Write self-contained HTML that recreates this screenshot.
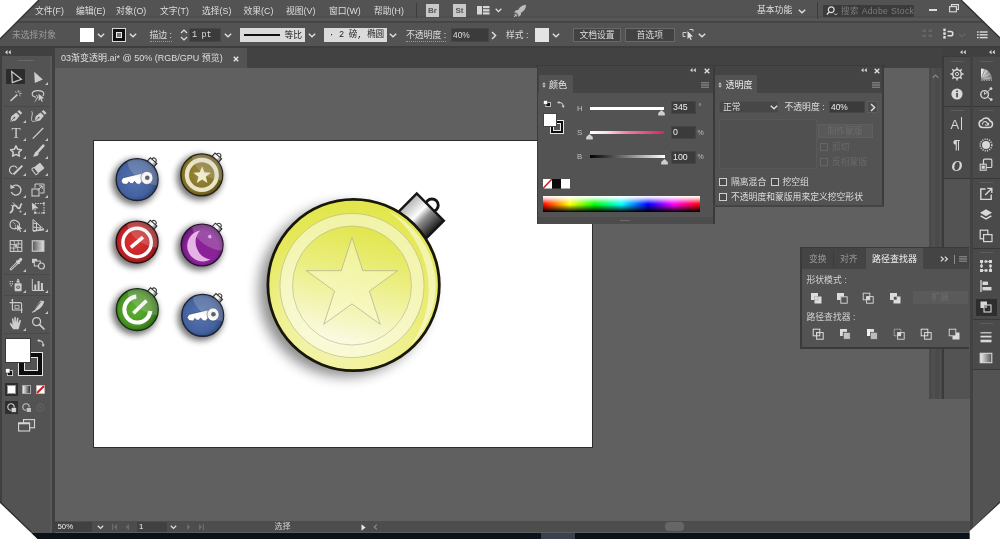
<!DOCTYPE html>
<html lang="zh-CN">
<head>
<meta charset="utf-8">
<title>03渐变透明.ai* @ 50% (RGB/GPU 预览)</title>
<style>
html,body{margin:0;padding:0}
body{width:1000px;height:539px;overflow:hidden;position:relative;background:#606060;
 font-family:"Liberation Sans","Noto Sans CJK SC",sans-serif;font-size:8.8px;color:#dedede;line-height:12px}
#app{position:absolute;left:0;top:0;width:1000px;height:539px;overflow:hidden;background:#606060;will-change:transform}
.a{position:absolute}
.t{position:absolute;white-space:nowrap;line-height:12px;height:12px}
svg{position:absolute;overflow:visible}
.dim{color:#777}
.dk{color:#222}
.inp{position:absolute;background:#3b3b3b;border:1px solid #464646;box-sizing:border-box}
.btn{position:absolute;background:#424242;border:1px solid #686868;box-sizing:border-box;text-align:center;line-height:12px}
.cb{position:absolute;width:7px;height:7px;border:1px solid #cfcfcf;box-sizing:border-box;background:#4a4a4a}
.sep{position:absolute;background:#3a3a3a;height:1px}
.grip{position:absolute;height:1px;background:#666}
</style>
</head>
<body>
<div id="app">

<!-- ================= MENU BAR ================= -->
<div class="a" id="menubar" style="left:0;top:0;width:1000px;height:22px;background:linear-gradient(180deg,#535353 0,#535353 16px,#4e4e4e 16.5px,#4e4e4e 18px,#575757 18.500px,#575757 20.500px,#444 21px,#444 22px)"></div>
<span class="t" style="left:35px;top:5px">文件(F)</span>
<span class="t" style="left:76px;top:5px">编辑(E)</span>
<span class="t" style="left:116px;top:5px">对象(O)</span>
<span class="t" style="left:160px;top:5px">文字(T)</span>
<span class="t" style="left:202px;top:5px">选择(S)</span>
<span class="t" style="left:243.5px;top:5px">效果(C)</span>
<span class="t" style="left:286px;top:5px">视图(V)</span>
<span class="t" style="left:329px;top:5px">窗口(W)</span>
<span class="t" style="left:374px;top:5px">帮助(H)</span>
<div class="a" style="left:416px;top:3px;width:1px;height:15px;background:#3c3c3c"></div>
<div class="a" style="left:426px;top:4px;width:13px;height:13px;background:#c9c9c9;color:#555;font-size:8px;font-weight:bold;text-align:center;line-height:13px">Br</div>
<div class="a" style="left:453px;top:4px;width:13px;height:13px;background:#c9c9c9;color:#555;font-size:8px;font-weight:bold;text-align:center;line-height:13px">St</div>
<svg style="left:477px;top:6px" width="13" height="9" viewBox="0 0 13 9"><rect x="0" y="0" width="5" height="8.5" fill="#d6d6d6"/><rect x="6" y="0" width="6.5" height="2.2" fill="#d6d6d6"/><rect x="6" y="3.2" width="6.5" height="2.2" fill="#d6d6d6"/><rect x="6" y="6.3" width="6.5" height="2.2" fill="#d6d6d6"/></svg>
<svg style="left:495px;top:8px" width="7" height="5" viewBox="0 0 7 5"><path d="M.7.8L3.5 3.6 6.3.8" fill="none" stroke="#e2e2e2" stroke-width="1.3"/></svg>
<svg style="left:513px;top:4px" width="14" height="14" viewBox="0 0 14 14"><path d="M13 .8C9.5.9 6.8 2.7 5.2 6L3 6.2 1 8.6l2.6.2 1.6 1.6.2 2.6L7.8 11 8 8.8C11.300 7.200 13.100 4.500 13 .8Z" fill="#bdbdbd"/><path d="M1.200 11.200l2.200-1.400M2.800 12.800l1.400-2.200M.8 13.200l2.600-2.600" stroke="#bdbdbd" stroke-width=".9"/></svg>
<span class="t" style="left:757px;top:4px">基本功能</span>
<svg style="left:798px;top:8.5px" width="8" height="5" viewBox="0 0 8 5"><path d="M.8.8L4 3.800 7.200.8" fill="none" stroke="#e2e2e2" stroke-width="1.3"/></svg>
<div class="a" style="left:817px;top:2px;width:1px;height:17px;background:#3c3c3c"></div>
<div class="a" style="left:823px;top:5px;width:91px;height:12px;background:#3b3b3b;border-radius:1px"></div>
<svg style="left:826px;top:6px" width="12" height="10" viewBox="0 0 12 10"><circle cx="5.200" cy="3.800" r="2.900" fill="none" stroke="#e0e0e0" stroke-width="1.200"/><path d="M3.200 6L.8 8.600" stroke="#e0e0e0" stroke-width="1.400"/><path d="M8.200 7.500l1.500 1.500 1.500-1.500" fill="none" stroke="#e0e0e0" stroke-width=".9"/></svg>
<span class="t" style="left:841px;top:5px;color:#7c7c7c;font-size:8.600px;letter-spacing:.35px">搜索 Adobe Stock</span>
<div class="a" style="left:929px;top:9px;width:8px;height:2px;background:#dcdcdc"></div>
<svg style="left:949px;top:4px" width="10" height="9" viewBox="0 0 10 9"><path d="M2.500 2.500V.6H9.400V5.500H7.500" fill="none" stroke="#dcdcdc" stroke-width="1.100"/><rect x=".6" y="2.600" width="6.800" height="5.200" fill="none" stroke="#dcdcdc" stroke-width="1.100"/></svg>


<!-- ================= CONTROL BAR ================= -->
<div class="a" id="ctrlbar" style="left:0;top:22px;width:1000px;height:24px;background:#535353;border-top:1px solid #474747;box-sizing:border-box"></div>
<div class="a" style="left:0;top:46px;width:1000px;height:2px;background:#3d3d3d"></div>
<span class="t" style="left:12px;top:28.5px;color:#9c9c9c">未选择对象</span>
<div class="a" style="left:80px;top:28px;width:14px;height:14px;background:#fff"></div>
<svg class="chev" style="left:97px;top:33px" width="8" height="5" viewBox="0 0 8 5"><path d="M.8.8L4 3.800 7.200.8" fill="none" stroke="#e2e2e2" stroke-width="1.300"/></svg>
<div class="a" style="left:112px;top:28px;width:14px;height:14px;background:#111;border:1px solid #d8d8d8;box-sizing:border-box"></div>
<div class="a" style="left:116px;top:32px;width:6px;height:6px;border:1px solid #e8e8e8;box-sizing:border-box;background:#777"></div>
<svg class="chev" style="left:129px;top:33px" width="8" height="5" viewBox="0 0 8 5"><path d="M.8.8L4 3.800 7.200.8" fill="none" stroke="#e2e2e2" stroke-width="1.300"/></svg>
<span class="t" style="left:149.500px;top:28.500px;border-bottom:1px dotted #9a9a9a;height:12.500px">描边 :</span>
<svg style="left:180px;top:28px" width="8" height="14" viewBox="0 0 8 14"><path d="M1 5L4 2 7 5M1 9L4 12 7 9" fill="none" stroke="#e2e2e2" stroke-width="1.200"/></svg>
<div class="inp" style="left:189px;top:28px;width:32px;height:14px"></div>
<span class="t" style="left:192px;top:28.500px;font-family:'Liberation Mono','Noto Sans CJK SC',monospace;font-size:8.500px;letter-spacing:-.3px">1 pt</span>
<svg class="chev" style="left:224px;top:33px" width="8" height="5" viewBox="0 0 8 5"><path d="M.8.8L4 3.800 7.200.8" fill="none" stroke="#e2e2e2" stroke-width="1.300"/></svg>
<div class="a" style="left:240px;top:28px;width:65px;height:14px;background:#dbdbdb"></div>
<div class="a" style="left:244px;top:34px;width:36px;height:2px;background:#111"></div>
<span class="t dk" style="left:284.500px;top:29px">等比</span>
<svg class="chev" style="left:308px;top:33px" width="8" height="5" viewBox="0 0 8 5"><path d="M.8.8L4 3.800 7.200.8" fill="none" stroke="#e2e2e2" stroke-width="1.300"/></svg>
<div class="a" style="left:323.500px;top:28px;width:63.500px;height:14px;background:#dbdbdb"></div>
<span class="t dk" style="left:329px;top:29px;font-family:'Liberation Mono','Noto Sans CJK SC',monospace;font-size:8.600px;letter-spacing:-.2px">· 2 磅, 椭圆</span>
<svg class="chev" style="left:389px;top:33px" width="8" height="5" viewBox="0 0 8 5"><path d="M.8.8L4 3.800 7.200.8" fill="none" stroke="#e2e2e2" stroke-width="1.300"/></svg>
<span class="t" style="left:406px;top:28.500px;border-bottom:1px dotted #9a9a9a;height:12.500px">不透明度 :</span>
<div class="inp" style="left:451px;top:28px;width:38px;height:14px"></div>
<span class="t" style="left:453px;top:28.500px;font-size:8.400px">40%</span>
<svg style="left:491px;top:30.500px" width="6" height="9" viewBox="0 0 6 9"><path d="M1 1L4.600 4.500 1 8" fill="none" stroke="#e2e2e2" stroke-width="1.400"/></svg>
<span class="t" style="left:506px;top:28.500px">样式 :</span>
<div class="a" style="left:535px;top:28px;width:14px;height:14px;background:#e4e4e4"></div>
<svg class="chev" style="left:552px;top:33px" width="8" height="5" viewBox="0 0 8 5"><path d="M.8.8L4 3.800 7.200.8" fill="none" stroke="#e2e2e2" stroke-width="1.300"/></svg>
<div class="btn" style="left:573px;top:27.500px;width:48px;height:14px;line-height:12px">文档设置</div>
<div class="btn" style="left:625px;top:27.500px;width:49.500px;height:14px;line-height:12px">首选项</div>
<svg style="left:682px;top:28px" width="13" height="13" viewBox="0 0 13 13"><path d="M1 4.500h3.500M1 4.500v4h2.500" fill="none" stroke="#cfcfcf" stroke-width="1"/><path d="M5.500 3l5.500 5.500-2.600.2 1.300 2.700-1.200.5-1.200-2.700-1.800 1.700z" fill="#e0e0e0"/><path d="M7.500 1.500h3.500v2" fill="none" stroke="#cfcfcf" stroke-width="1"/></svg>
<svg class="chev" style="left:698px;top:33px" width="8" height="5" viewBox="0 0 8 5"><path d="M.8.8L4 3.800 7.200.8" fill="none" stroke="#e2e2e2" stroke-width="1.300"/></svg>
<svg style="left:922px;top:29px" width="11" height="9" viewBox="0 0 11 9"><g fill="#656565"><rect x=".5" y=".5" width="3.500" height="2.500"/><rect x="6.500" y=".5" width="3.500" height="2.500"/><rect x=".5" y="5.500" width="3.500" height="2.500"/><rect x="6.500" y="5.500" width="3.500" height="2.500"/></g></svg>
<svg style="left:943px;top:28px" width="12" height="12" viewBox="0 0 12 12"><g fill="#e0e0e0"><rect x=".3" y=".6" width="2.400" height="2.600"/><rect x=".3" y="4.300" width="2.400" height="2.600"/><rect x=".3" y="8" width="2.400" height="2.600"/></g><path d="M4.500 3.600h3.200a2.100 2.100 0 0 1 0 4.200H4.500" fill="none" stroke="#e0e0e0" stroke-width="1.500"/></svg>
<svg class="chev" style="left:958px;top:33px" width="8" height="5" viewBox="0 0 8 5"><path d="M.8.8L4 3.800 7.200.8" fill="none" stroke="#666" stroke-width="1.200"/></svg>
<svg style="left:977px;top:31px" width="11" height="8" viewBox="0 0 11 8"><g fill="#dcdcdc"><rect x="0" y=".3" width="1.600" height="1.400"/><rect x="2.600" y=".3" width="8" height="1.400"/><rect x="0" y="3.100" width="1.600" height="1.400"/><rect x="2.600" y="3.100" width="8" height="1.400"/><rect x="0" y="5.900" width="1.600" height="1.400"/><rect x="2.600" y="5.900" width="8" height="1.400"/></g></svg>


<!-- ================= TAB BAR ================= -->
<div class="a" id="tabbar" style="left:0;top:48px;width:1000px;height:20px;background:#424242"></div>
<div class="a" id="doctab" style="left:54px;top:48px;width:193px;height:20px;background:#535353"></div>
<span class="t" style="left:61px;top:52px;font-size:9px">03渐变透明.ai* @ 50% (RGB/GPU 预览)</span>
<svg style="left:233px;top:55.500px" width="6" height="6" viewBox="0 0 6 6"><path d="M.8.8L5.200 5.200M5.200.8L.8 5.200" stroke="#e6e6e6" stroke-width="1.400"/></svg>


<!-- ================= CANVAS ================= -->
<div class="a" id="canvas" style="left:54px;top:68px;width:876px;height:454px;background:#606060"></div>
<div class="a" id="artboard" style="left:93px;top:140px;width:500px;height:308px;background:#fff;border:1px solid #2c2c2c;box-sizing:border-box"></div>
<svg id="art" style="left:0;top:0" width="1000" height="539" viewBox="0 0 1000 539">
<defs>
 <filter id="sh1" x="-50%" y="-50%" width="200%" height="200%"><feGaussianBlur stdDeviation="6.5"/></filter>
 <filter id="sh2" x="-50%" y="-50%" width="200%" height="200%"><feGaussianBlur stdDeviation="3"/></filter>
 <linearGradient id="gy" x1="0" y1="0" x2="0" y2="1"><stop offset="0" stop-color="#e2e64a"/><stop offset=".5" stop-color="#e8eb68"/><stop offset="1" stop-color="#f0f08e"/></linearGradient>
 <linearGradient id="gy2" x1=".6" y1="0" x2=".38" y2="1"><stop offset="0" stop-color="#e1e64c"/><stop offset=".4" stop-color="#ebee80"/><stop offset="1" stop-color="#fbfbe8"/></linearGradient>
 <radialGradient id="gyw" cx=".4" cy=".66" r=".5"><stop offset="0" stop-color="#fff" stop-opacity=".55"/><stop offset="1" stop-color="#fff" stop-opacity="0"/></radialGradient>
 <linearGradient id="gcap" x1="0" y1="0" x2="1" y2="0"><stop offset="0" stop-color="#b4b4b4"/><stop offset=".4" stop-color="#fdfdfd"/><stop offset=".6" stop-color="#8e8e8e"/><stop offset="1" stop-color="#1a1a1a"/></linearGradient>
 <radialGradient id="gblue" cx=".45" cy=".5" r=".58"><stop offset="0" stop-color="#5474b2"/><stop offset=".7" stop-color="#44629f"/><stop offset="1" stop-color="#2b406f"/></radialGradient>
 <radialGradient id="ggold" cx=".45" cy=".5" r=".58"><stop offset="0" stop-color="#9a8834"/><stop offset=".7" stop-color="#82722a"/><stop offset="1" stop-color="#4d4216"/></radialGradient>
 <radialGradient id="gred" cx=".45" cy=".5" r=".58"><stop offset="0" stop-color="#e2322f"/><stop offset=".65" stop-color="#c02226"/><stop offset="1" stop-color="#7a1216"/></radialGradient>
 <radialGradient id="gpur" cx=".5" cy=".55" r=".58"><stop offset="0" stop-color="#8a1f96"/><stop offset=".65" stop-color="#8a249a"/><stop offset="1" stop-color="#541260"/></radialGradient>
 <radialGradient id="ggrn" cx=".45" cy=".5" r=".58"><stop offset="0" stop-color="#5cb22e"/><stop offset=".65" stop-color="#4a9624"/><stop offset="1" stop-color="#275a14"/></radialGradient>
 <linearGradient id="gcaps" x1="0" y1="0" x2="1" y2="0"><stop offset="0" stop-color="#d8d8d8"/><stop offset=".5" stop-color="#fff"/><stop offset="1" stop-color="#6a6a6a"/></linearGradient>
 <clipPath id="abclip"><rect x="94" y="141" width="498" height="306"/></clipPath>
 <clipPath id="bclip"><circle r="20.6"/></clipPath>
 <g id="scap"><path d="M-2.400-25.200a2.400 2.700 0 0 1 4.800 0" fill="none" stroke="#3a3a3a" stroke-width="1"/><rect x="-4.400" y="-25.200" width="8.800" height="5.400" fill="url(#gcaps)" stroke="#2c2c2c" stroke-width="1"/></g>
 <g id="gloss" clip-path="url(#bclip)"><ellipse cx="6" cy="-17" rx="25" ry="15.500" transform="rotate(28)" fill="#d6d6d6" opacity=".24"/></g>
 <g id="key"><path d="M-16 1.300L-14.300-1.700 5-6.300 5 1.800 2.200 4.800-.4 4.300-2.500 1.700-4.600 4.100-7 3.700-8.200 2.100-10 4.700-14.200 4.300Z" fill="#fff" stroke="#2a3350" stroke-width=".5" stroke-linejoin="round"/><ellipse cx="9.800" cy="-1.700" rx="6" ry="6.500" fill="#fff" stroke="#2a3350" stroke-width=".5"/><circle cx="10.200" cy="-1.900" r="2.300" fill="#353c4c"/></g>
</defs>
<g clip-path="url(#abclip)">
 <circle cx="345" cy="290.500" r="86" fill="#000" opacity=".45" filter="url(#sh1)"/>
 <g transform="translate(353.600 285) rotate(45)">
  <circle cx="-1" cy="-111.800" r="6.300" fill="none" stroke="#161616" stroke-width="2.900"/>
  <rect x="-20" y="-109.300" width="38.300" height="27" fill="url(#gcap)" stroke="#161616" stroke-width="2.400" stroke-linejoin="miter"/>
 </g>
 <circle cx="353.600" cy="285" r="85.700" fill="url(#gy)"/>
 <circle cx="353.600" cy="285" r="85.700" fill="url(#gyw)"/>
 <circle cx="352" cy="285.500" r="72" fill="#fff" fill-opacity=".5" stroke="#b3b48a" stroke-width=".6"/>
 <circle cx="352" cy="285.500" r="59.500" fill="url(#gy2)" stroke="#b3b48a" stroke-width=".6"/>
 <path d="M352.00 237.50 L362.78 270.67 L397.65 270.67 L369.44 291.17 L380.21 324.33 L352.00 303.84 L323.79 324.33 L334.56 291.17 L306.35 270.67 L341.22 270.67Z" fill="#fbfbd2" fill-opacity=".5" stroke="#adad90" stroke-width=".7" stroke-linejoin="miter"/>
 <path d="M388 211 A83 83 0 0 1 411 345 A96 96 0 0 0 388 211Z" fill="#fff" opacity=".5"/>
 <circle cx="353.600" cy="285" r="85.700" fill="none" stroke="#17170a" stroke-width="2.800"/>
 <g transform="translate(137.1 179.6)">
  <circle cx="-2.200" cy="2.400" r="23" fill="#000" opacity="0.55" filter="url(#sh2)"/>
  <use href="#scap" transform="rotate(41)"/>
  <circle r="20.900" fill="url(#gblue)" stroke="#1b2233" stroke-width="1.400"/>
  <use href="#key"/>
  <use href="#gloss"/>
 </g>
<g transform="translate(201.8 174.9)">
  <circle cx="-2.200" cy="2.400" r="23" fill="#000" opacity="0.55" filter="url(#sh2)"/>
  <use href="#scap" transform="rotate(41)"/>
  <circle r="20.900" fill="url(#ggold)" stroke="#262210" stroke-width="1.400"/>
  <circle r="14.900" fill="none" stroke="#e9e5c6" stroke-width="4.300"/><path d="M0.30 -8.60 L2.59 -2.56 L9.05 -2.24 L4.01 1.81 L5.71 8.04 L0.30 4.50 L-5.11 8.04 L-3.41 1.81 L-8.45 -2.24 L-1.99 -2.56Z" fill="#f0ecd0"/>
  <use href="#gloss"/>
 </g>
<g transform="translate(137.1 242.1)">
  <circle cx="-2.200" cy="2.400" r="23" fill="#000" opacity="0.55" filter="url(#sh2)"/>
  <use href="#scap" transform="rotate(41)"/>
  <circle r="20.900" fill="url(#gred)" stroke="#2a0c0e" stroke-width="1.400"/>
  <circle cx="0" cy=".4" r="14.200" fill="none" stroke="#fff" stroke-width="3.400"/><path d="M-6.200 5.300L5.900-4.900" stroke="#fff" stroke-width="3.500"/>
  <use href="#gloss"/>
 </g>
<g transform="translate(202.1 245)">
  <circle cx="-2.200" cy="2.400" r="23" fill="#000" opacity="0.55" filter="url(#sh2)"/>
  <use href="#scap" transform="rotate(41)"/>
  <circle r="20.900" fill="url(#gpur)" stroke="#2a1030" stroke-width="1.400"/>
  <path d="M-2-14.500A15.600 15.600 0 1 0 8.300 14.500A17.600 17.600 0 0 1-2-14.500Z" fill="#e7b3e6"/><path d="M9.00 -10.65 L8.70 -8.85 L10.24 -7.86 L8.44 -7.58 L7.97 -5.81 L7.15 -7.45 L5.32 -7.34 L6.62 -8.63 L5.96 -10.33 L7.59 -9.49Z" fill="#edc6ee"/>
  <use href="#gloss"/>
 </g>
<g transform="translate(137.3 309.6)">
  <circle cx="-2.200" cy="2.400" r="23" fill="#000" opacity="0.55" filter="url(#sh2)"/>
  <use href="#scap" transform="rotate(41)"/>
  <circle r="20.900" fill="url(#ggrn)" stroke="#15300c" stroke-width="1.400"/>
  <path d="M-1-13A13 13 0 1 0 13 1.400" fill="none" stroke="#fff" stroke-width="4.100"/><path d="M-3.900 3.700L9.200-9" stroke="#fff" stroke-width="3.600"/>
  <use href="#gloss"/>
 </g>
<g transform="translate(202.7 315.4)">
  <circle cx="-2.200" cy="2.400" r="23" fill="#000" opacity="0.55" filter="url(#sh2)"/>
  <use href="#scap" transform="rotate(41)"/>
  <circle r="20.900" fill="url(#gblue)" stroke="#1b2233" stroke-width="1.400"/>
  <use href="#key" transform="translate(.5 .8)"/>
  <use href="#gloss"/>
 </g>
</g>
</svg>


<!-- ================= LEFT TOOLBAR ================= -->
<div class="a" id="toolbar" style="left:0;top:48px;width:54px;height:491px;background:#404040"></div>
<div class="a" style="left:2px;top:56px;width:50px;height:483px;background:#535353"></div>
<div class="a" style="left:49.500px;top:56px;width:2.500px;height:483px;background:#595959"></div>
<div class="a" style="left:0;top:48px;width:2px;height:491px;background:#404040"></div>
<svg style="left:4.500px;top:50px" width="6" height="4.500" viewBox="0 0 7 5"><path d="M3 0L0 2.500 3 5zM6.800 0L3.800 2.500 6.800 5z" fill="#d0d0d0"/></svg>
<div class="a" style="left:18px;top:60px;width:16px;height:1px;background:#686868"></div>
<div class="a" style="left:6px;top:69px;width:19px;height:15px;background:#2c2c2c;border-radius:1px"></div>
<div class="a" style="left:4px;top:105.5px;width:46px;height:1px;background:#494949"></div>
<div class="a" style="left:4px;top:178px;width:46px;height:1px;background:#494949"></div>
<div class="a" style="left:4px;top:273.8px;width:46px;height:1px;background:#494949"></div>
<div class="a" style="left:4px;top:295px;width:46px;height:1px;background:#494949"></div>
<div class="a" style="left:4px;top:333px;width:46px;height:1px;background:#494949"></div>
<svg style="left:8.5px;top:70.0px" width="14" height="14" viewBox="0 0 14 14"><path d="M2.700 1.500L3.300 12.700 12.400 9.300Z" fill="none" stroke="#cdcdcd" stroke-width="1.250" stroke-linejoin="miter"/></svg>
<svg style="left:30.7px;top:70.0px" width="14" height="14" viewBox="0 0 14 14"><path d="M3.200 1.800L3.800 13 11.800 9.600Z" fill="#cdcdcd"/></svg>
<svg style="left:44.7px;top:81.5px" width="3" height="3" viewBox="0 0 3 3"><path d="M3 0V3H0z" fill="#c4c4c4"/></svg>
<svg style="left:8.5px;top:88.5px" width="14" height="14" viewBox="0 0 14 14"><path d="M1.500 12L8.300 5.600" stroke="#cdcdcd" stroke-width="1.500"/><path d="M9.200 1.200v2.200M11.300 2.200l-1.200 1.300M12.600 4.600h-2.200M11.600 7l-1.400-1.100M6.200 2.600l1.400 1.200" stroke="#cdcdcd" stroke-width=".9"/></svg>
<svg style="left:30.7px;top:88.5px" width="14" height="14" viewBox="0 0 14 14"><path d="M5.200 8.200C2.800 7.900 1.200 6.600 1.200 5 1.200 3 3.800 1.600 7 1.600s5.800 1.400 5.800 3.400c0 .8-.4 1.500-1.100 2" fill="none" stroke="#cdcdcd" stroke-width="1.150"/><path d="M5.200 6.400a1.500 1.500 0 1 1 0 3.200c0 1.600-.6 2.600-1.600 3.200" fill="none" stroke="#cdcdcd" stroke-width=".9"/><path d="M7.600 4.800l5.600 4.400-2.600.3 1.300 2.700-1.200.6-1.300-2.700-1.800 1.800z" fill="#cdcdcd"/></svg>
<svg style="left:8.5px;top:108.5px" width="14" height="14" viewBox="0 0 14 14"><path d="M1.200 12.800L2.400 7.200 7.200 3.400 10.600 6.800 6.800 11.600Z" fill="#cdcdcd"/><path d="M8.400 2.600l1.800-1.600 3 3-1.600 1.800z" fill="#cdcdcd"/><path d="M1.600 12.400L5 9" stroke="#535353" stroke-width=".8"/><circle cx="5.400" cy="8.600" r=".9" fill="#535353"/></svg>
<svg style="left:22.5px;top:120.0px" width="3" height="3" viewBox="0 0 3 3"><path d="M3 0V3H0z" fill="#c4c4c4"/></svg>
<svg style="left:30.7px;top:108.5px" width="14" height="14" viewBox="0 0 14 14"><g transform="translate(2.300 0)"><path d="M1.200 12.800L2.400 7.200 7.200 3.400 10.600 6.800 6.800 11.600Z" fill="#cdcdcd"/><path d="M8.400 2.600l1.800-1.600 3 3-1.600 1.800z" fill="#cdcdcd"/><path d="M1.600 12.400L5 9" stroke="#535353" stroke-width=".8"/><circle cx="5.400" cy="8.600" r=".9" fill="#535353"/></g><path d="M.5 2.200c2.200 1.500-.8 6.500.3 9.300.5 1.300 1.800 1.300 2.800.6" fill="none" stroke="#cdcdcd" stroke-width=".9"/></svg>
<svg style="left:8.5px;top:126.2px" width="14" height="14" viewBox="0 0 14 14"><text x="7" y="12.300" font-family="Liberation Serif,serif" font-size="15" text-anchor="middle" fill="#cdcdcd">T</text></svg>
<svg style="left:22.5px;top:137.7px" width="3" height="3" viewBox="0 0 3 3"><path d="M3 0V3H0z" fill="#c4c4c4"/></svg>
<svg style="left:30.7px;top:126.2px" width="14" height="14" viewBox="0 0 14 14"><path d="M1.700 12.600L12.200 2" stroke="#cdcdcd" stroke-width="1.300"/></svg>
<svg style="left:44.7px;top:137.7px" width="3" height="3" viewBox="0 0 3 3"><path d="M3 0V3H0z" fill="#c4c4c4"/></svg>
<svg style="left:8.5px;top:144.0px" width="14" height="14" viewBox="0 0 14 14"><path d="M7 1.800L8.700 5.300 12.500 5.800 9.700 8.400 10.400 12.200 7 10.400 3.600 12.200 4.300 8.400 1.500 5.800 5.300 5.300Z" fill="none" stroke="#cdcdcd" stroke-width="1.500" stroke-linejoin="round"/></svg>
<svg style="left:22.5px;top:155.5px" width="3" height="3" viewBox="0 0 3 3"><path d="M3 0V3H0z" fill="#c4c4c4"/></svg>
<svg style="left:30.7px;top:144.0px" width="14" height="14" viewBox="0 0 14 14"><path d="M12.400 1.600L7.200 7.400" stroke="#cdcdcd" stroke-width="2.600" stroke-linecap="round"/><path d="M5.600 7l2.300 2.200c-.3 2.300-2.700 3.600-6.300 3.200 1.900-.9 1.400-3.900 4-5.400z" fill="#cdcdcd"/></svg>
<svg style="left:44.7px;top:155.5px" width="3" height="3" viewBox="0 0 3 3"><path d="M3 0V3H0z" fill="#c4c4c4"/></svg>
<svg style="left:8.5px;top:161.5px" width="14" height="14" viewBox="0 0 14 14"><circle cx="4.500" cy="8" r="4" fill="none" stroke="#cdcdcd" stroke-width="1.200"/><path d="M4.400 12.400L13.400 3.600" stroke="#535353" stroke-width="3.800"/><path d="M4.600 12.200L13.400 3.600" stroke="#cdcdcd" stroke-width="2"/></svg>
<svg style="left:22.5px;top:173.0px" width="3" height="3" viewBox="0 0 3 3"><path d="M3 0V3H0z" fill="#c4c4c4"/></svg>
<svg style="left:30.7px;top:161.5px" width="14" height="14" viewBox="0 0 14 14"><g transform="rotate(-38 7 7)"><rect x="1.800" y="3.200" width="10.800" height="7.200" rx=".8" fill="#cdcdcd"/><rect x="1.800" y="3.200" width="3.200" height="7.200" rx=".8" fill="#535353" stroke="#cdcdcd" stroke-width="1"/></g></svg>
<svg style="left:44.7px;top:173.0px" width="3" height="3" viewBox="0 0 3 3"><path d="M3 0V3H0z" fill="#c4c4c4"/></svg>
<svg style="left:8.5px;top:183.0px" width="14" height="14" viewBox="0 0 14 14"><path d="M3.300 3.600A5 5 0 1 1 2.300 9" fill="none" stroke="#cdcdcd" stroke-width="1.300"/><path d="M1.200 1.400l.5 4.500 4.300-1.300z" fill="#cdcdcd"/></svg>
<svg style="left:22.5px;top:194.5px" width="3" height="3" viewBox="0 0 3 3"><path d="M3 0V3H0z" fill="#c4c4c4"/></svg>
<svg style="left:30.7px;top:183.0px" width="14" height="14" viewBox="0 0 14 14"><rect x="1" y="6" width="7" height="7" fill="none" stroke="#cdcdcd" stroke-width="1.100"/><path d="M4 4.800V1h9v9H9.200" fill="none" stroke="#cdcdcd" stroke-width="1"/><path d="M6.500 7.500L11 3M8 2.800h3.200V6" fill="none" stroke="#cdcdcd" stroke-width="1"/></svg>
<svg style="left:44.7px;top:194.5px" width="3" height="3" viewBox="0 0 3 3"><path d="M3 0V3H0z" fill="#c4c4c4"/></svg>
<svg style="left:8.5px;top:200.5px" width="14" height="14" viewBox="0 0 14 14"><path d="M1.500 11.500c2-1 2.500-2.500 2.200-4.500S5 3.500 6.800 4.800 9 8.200 10.500 7.200 11 3.500 12.500 3" fill="none" stroke="#cdcdcd" stroke-width="1.700" stroke-linecap="round"/><path d="M4 1.500l2 2.200M2.200 4.200l1.600 1" stroke="#cdcdcd" stroke-width="1"/><circle cx="11.500" cy="10.600" r="1" fill="#cdcdcd"/></svg>
<svg style="left:22.5px;top:212.0px" width="3" height="3" viewBox="0 0 3 3"><path d="M3 0V3H0z" fill="#c4c4c4"/></svg>
<svg style="left:30.7px;top:200.5px" width="14" height="14" viewBox="0 0 14 14"><rect x="4" y="2.500" width="9" height="9.500" fill="none" stroke="#cdcdcd" stroke-width="1" stroke-dasharray="1.500 1"/><path d="M.8 1.400l.5 8.200 2-2 4.200-.4z" fill="#cdcdcd"/><rect x="11.800" y="1.300" width="2" height="2" fill="#cdcdcd"/><rect x="11.800" y="10.800" width="2" height="2" fill="#cdcdcd"/><rect x="3" y="10.800" width="2" height="2" fill="#cdcdcd"/></svg>
<svg style="left:8.5px;top:217.7px" width="14" height="14" viewBox="0 0 14 14"><path d="M1 6.500C1 3 4 1.500 6.500 2.500S11 5 10.500 7.500 6 11.500 3.500 10.500 1 8.500 1 6.500z" fill="none" stroke="#cdcdcd" stroke-width="1.100"/><path d="M3.500 4C6 5 7 7 6.500 10" fill="none" stroke="#cdcdcd" stroke-width=".9" stroke-dasharray="1.200 .8"/><path d="M8 6.500l5.500 4.200-2.500.3 1.200 2.600-1.100.5-1.200-2.600-1.700 1.600z" fill="#cdcdcd"/></svg>
<svg style="left:22.5px;top:229.2px" width="3" height="3" viewBox="0 0 3 3"><path d="M3 0V3H0z" fill="#c4c4c4"/></svg>
<svg style="left:30.7px;top:217.7px" width="14" height="14" viewBox="0 0 14 14"><path d="M2 1.500V13L13 11.500 2 1.500M2 5l4.500 1M2 9l8.300 1.200M5.500 4.700v7.800M9.200 8v4" fill="none" stroke="#cdcdcd" stroke-width="1"/><path d="M2 13l11-1.500" stroke="#cdcdcd" stroke-width="1.300"/></svg>
<svg style="left:44.7px;top:229.2px" width="3" height="3" viewBox="0 0 3 3"><path d="M3 0V3H0z" fill="#c4c4c4"/></svg>
<svg style="left:8.5px;top:239.0px" width="14" height="14" viewBox="0 0 14 14"><rect x="1.200" y="1.600" width="11.600" height="10.800" fill="none" stroke="#cdcdcd" stroke-width="1.100"/><path d="M1.200 5.200c4 1.600 7.600-1.600 11.600 0M1.200 8.800c4 1.600 7.600-1.600 11.600 0M5 1.600c1.400 3.600-1.400 7.200 0 10.800M9 1.600c1.400 3.600-1.400 7.200 0 10.800" fill="none" stroke="#cdcdcd" stroke-width=".9"/><circle cx="7" cy="6.800" r="1.300" fill="#cdcdcd"/></svg>
<svg style="left:30.7px;top:239.0px" width="14" height="14" viewBox="0 0 14 14"><defs><linearGradient id="tg" x1="0" x2="1"><stop offset="0" stop-color="#555"/><stop offset="1" stop-color="#e4e4e4"/></linearGradient></defs><rect x="1.300" y="1.800" width="11.600" height="10.400" fill="url(#tg)" stroke="#cdcdcd" stroke-width="1.100"/></svg>
<svg style="left:8.5px;top:257.0px" width="14" height="14" viewBox="0 0 14 14"><path d="M2 12.200L8.400 5.800" stroke="#cdcdcd" stroke-width="2.600" stroke-linecap="round"/><path d="M2 12.200L8 6.200" stroke="#535353" stroke-width=".9"/><path d="M7.400 3.600l3.200 3.200" stroke="#cdcdcd" stroke-width="1.600"/><path d="M9 5.200L11.800 2.400" stroke="#cdcdcd" stroke-width="3" stroke-linecap="round"/></svg>
<svg style="left:22.5px;top:268.5px" width="3" height="3" viewBox="0 0 3 3"><path d="M3 0V3H0z" fill="#c4c4c4"/></svg>
<svg style="left:30.7px;top:257.0px" width="14" height="14" viewBox="0 0 14 14"><rect x="1" y="1.800" width="5" height="4.200" fill="#cdcdcd"/><rect x="3.300" y="4" width="6" height="5" fill="#535353" stroke="#cdcdcd" stroke-width="1"/><circle cx="10.400" cy="9" r="3" fill="#535353" stroke="#cdcdcd" stroke-width="1.200"/></svg>
<svg style="left:8.5px;top:278.0px" width="14" height="14" viewBox="0 0 14 14"><rect x="5.600" y="5.300" width="7" height="8" rx="1" fill="#cdcdcd"/><rect x="7.600" y="2.600" width="3" height="2" fill="#cdcdcd"/><rect x="8.300" y="1" width="1.600" height="1.600" fill="#cdcdcd"/><circle cx="9.100" cy="9.300" r="1.800" fill="#535353"/><path d="M9.100 8.200v2.200M8 9.300h2.200" stroke="#cdcdcd" stroke-width=".7"/><g fill="#cdcdcd"><rect x=".6" y="3" width="1.200" height="1.200"/><rect x="2.800" y="3" width="1.200" height="1.200"/><rect x=".6" y="5.200" width="1.200" height="1.200"/><rect x="2.800" y="5.200" width="1.200" height="1.200"/><rect x="1.700" y="7.200" width="1.200" height="1.200"/></g></svg>
<svg style="left:22.5px;top:289.5px" width="3" height="3" viewBox="0 0 3 3"><path d="M3 0V3H0z" fill="#c4c4c4"/></svg>
<svg style="left:30.7px;top:278.0px" width="14" height="14" viewBox="0 0 14 14"><path d="M1.300 1v11.500H13" fill="none" stroke="#cdcdcd" stroke-width="1"/><rect x="3.300" y="6.500" width="2" height="5.500" fill="#cdcdcd"/><rect x="6.600" y="3" width="2" height="9" fill="#cdcdcd"/><rect x="9.900" y="5" width="2" height="7" fill="#cdcdcd"/></svg>
<svg style="left:44.7px;top:289.5px" width="3" height="3" viewBox="0 0 3 3"><path d="M3 0V3H0z" fill="#c4c4c4"/></svg>
<svg style="left:8.5px;top:299.0px" width="14" height="14" viewBox="0 0 14 14"><path d="M3.400 .6V11h10.200M.6 3.600h10.600a1.400 1.400 0 0 1 1.400 1.400v9" fill="none" stroke="#cdcdcd" stroke-width="1.100"/><rect x="6" y="6.300" width="4" height="3" fill="none" stroke="#cdcdcd" stroke-width=".8"/><circle cx="3.400" cy=".9" r=".9" fill="#cdcdcd"/></svg>
<svg style="left:30.7px;top:299.0px" width="14" height="14" viewBox="0 0 14 14"><path d="M1.800 12.800L9.600 1.400 13.200 2.200C12.500 6.500 9 10.300 5 11.600Z" fill="#cdcdcd"/><path d="M1.800 12.800L10 2.600" stroke="#535353" stroke-width=".9"/><path d="M1 13.300l4.200-1.500" stroke="#cdcdcd" stroke-width="1"/></svg>
<svg style="left:44.7px;top:310.5px" width="3" height="3" viewBox="0 0 3 3"><path d="M3 0V3H0z" fill="#c4c4c4"/></svg>
<svg style="left:8.5px;top:316.3px" width="14" height="14" viewBox="0 0 14 14"><path d="M4.300 13.200C3 11.500 1.600 9.600 .9 7.900c-.3-.9.700-1.400 1.300-.7l1.500 1.700L2.900 3c-.1-1 1.200-1.200 1.400-.2l.9 3.800L5.300 1.500c0-1 1.400-1 1.500 0l.2 5 1.100-4.400c.3-1 1.500-.7 1.400.3L8.900 7.300l1.700-3c.5-.8 1.600-.3 1.300.6-1 2.700-1.400 5.600-2.300 8.300z" fill="#cdcdcd"/></svg>
<svg style="left:22.5px;top:327.8px" width="3" height="3" viewBox="0 0 3 3"><path d="M3 0V3H0z" fill="#c4c4c4"/></svg>
<svg style="left:30.7px;top:316.3px" width="14" height="14" viewBox="0 0 14 14"><circle cx="5.600" cy="5.600" r="4" fill="none" stroke="#cdcdcd" stroke-width="1.300"/><path d="M8.600 8.600L13 13" stroke="#cdcdcd" stroke-width="1.700" stroke-linecap="round"/></svg>
<div class="a" style="left:18px;top:351.500px;width:25px;height:24.500px;background:#0e0e0e;border:1px solid #e4e4e4;box-sizing:border-box"></div>
<div class="a" style="left:23.500px;top:357px;width:14px;height:13.500px;background:#535353;border:1px solid #e4e4e4;box-sizing:border-box"></div>
<div class="a" style="left:4.500px;top:338px;width:26px;height:24.500px;background:#fff;border:1px solid #3a3a3a;box-sizing:border-box"></div>
<svg style="left:36.500px;top:339px" width="8" height="8" viewBox="0 0 8 8"><path d="M1.800 1.600c2.600-.2 4.400 1.600 4.400 4.400" fill="none" stroke="#cdcdcd" stroke-width="1.100"/><path d="M0 1.600L2.400 0v3.200zM6.200 8L4.600 5.600h3.200z" fill="#cdcdcd"/></svg>
<svg style="left:5px;top:368px" width="8" height="8" viewBox="0 0 8 8"><rect x="2.600" y="2.600" width="5" height="5" fill="#111" stroke="#e0e0e0" stroke-width=".8"/><rect x=".4" y=".4" width="4.600" height="4.600" fill="#fff" stroke="#333" stroke-width=".6"/></svg>
<div class="a" style="left:5px;top:382.500px;width:13px;height:13px;background:#2e2e2e"></div>
<div class="a" style="left:7px;top:384.500px;width:9px;height:9px;background:#fff;border:1px solid #999;box-sizing:border-box"></div>
<div class="a" style="left:21.500px;top:384.500px;width:9px;height:9px;background:linear-gradient(90deg,#eee,#333);border:1px solid #aaa;box-sizing:border-box"></div>
<svg style="left:36px;top:384.500px" width="9" height="9" viewBox="0 0 9 9"><rect width="9" height="9" fill="#fff"/><path d="M0 9L9 0" stroke="#d0202a" stroke-width="2.200"/><rect x=".4" y=".4" width="8.200" height="8.200" fill="none" stroke="#aaa" stroke-width=".8"/></svg>
<div class="a" style="left:5px;top:400.500px;width:13px;height:13px;background:#2e2e2e"></div>
<svg style="left:7px;top:402.500px" width="10" height="10" viewBox="0 0 10 10"><circle cx="4" cy="4" r="3.200" fill="none" stroke="#d4d4d4" stroke-width="1.100"/><rect x="4.200" y="4.600" width="5" height="4.600" fill="#d4d4d4" stroke="#3a3a3a" stroke-width=".5"/></svg>
<svg style="left:21.5px;top:402.500px" width="10" height="10" viewBox="0 0 10 10"><circle cx="4" cy="4" r="3.200" fill="none" stroke="#c4c4c4" stroke-width="1.100"/><rect x="4.200" y="4.600" width="5" height="4.600" fill="#c4c4c4" stroke="#3a3a3a" stroke-width=".5"/></svg>
<svg style="left:36px;top:402.500px" width="10" height="10" viewBox="0 0 10 10"><circle cx="4.500" cy="4.500" r="3.400" fill="none" stroke="#626262" stroke-width="1.100"/><circle cx="4.500" cy="4.500" r="1.300" fill="#626262"/></svg>
<svg style="left:17.500px;top:419px" width="17" height="13" viewBox="0 0 17 13"><rect x="5.500" y=".6" width="11" height="8.200" fill="#5a5a5a" stroke="#d6d6d6" stroke-width="1.100"/><rect x=".6" y="3.800" width="11" height="8.200" fill="#535353" stroke="#d6d6d6" stroke-width="1.100"/><path d="M.6 4.600h11" stroke="#d6d6d6" stroke-width="1.400"/></svg>


<!-- ================= STATUS BAR ================= -->
<div class="a" id="status" style="left:54px;top:520.500px;width:916px;height:12.500px;background:#4d4d4d;border-bottom:1px solid #5e5e5e;box-sizing:border-box"></div>
<div class="a" style="left:52px;top:48px;width:2.500px;height:491px;background:#404040"></div>
<div class="inp" style="left:55px;top:521.500px;width:37px;height:10px;background:#414141;border:0"></div>
<span class="t" style="left:57.500px;top:521.300px;font-size:7.800px;color:#f0f0f0">50%</span>
<svg style="left:96.500px;top:525px" width="7" height="5" viewBox="0 0 7 5"><path d="M.8.800L3.500 3.400 6.200.800" fill="none" stroke="#e2e2e2" stroke-width="1.200"/></svg>
<svg style="left:112px;top:524px" width="20" height="6" viewBox="0 0 20 6"><g fill="#6c6c6c"><rect x="0" y="0" width="1.200" height="6"/><path d="M5 0V6L1.800 3z"/><path d="M17 0V6L13.800 3z"/></g></svg>
<div class="inp" style="left:137px;top:521.500px;width:30px;height:10px;background:#414141;border:0"></div>
<span class="t" style="left:139px;top:521.300px;font-size:7.800px;color:#f0f0f0">1</span>
<svg style="left:169.500px;top:525px" width="7" height="5" viewBox="0 0 7 5"><path d="M.8.800L3.500 3.400 6.200.800" fill="none" stroke="#e2e2e2" stroke-width="1.200"/></svg>
<svg style="left:186px;top:524px" width="20" height="6" viewBox="0 0 20 6"><g fill="#6c6c6c"><path d="M1 0V6L4.200 3z"/><path d="M13 0V6L16.200 3z"/><rect x="16.800" y="0" width="1.200" height="6"/></g></svg>
<span class="t" style="left:274.500px;top:521.300px;font-size:8px;color:#cfcfcf">选择</span>
<svg style="left:361px;top:523.500px" width="5" height="7" viewBox="0 0 5 7"><path d="M.5.300V6.700L4.600 3.500z" fill="#e6e6e6"/></svg>
<svg style="left:372.500px;top:524px" width="5" height="6" viewBox="0 0 5 6"><path d="M3.800.600L1.200 3 3.800 5.400" fill="none" stroke="#8c8c8c" stroke-width="1.100"/></svg>
<div class="a" style="left:665px;top:522px;width:19px;height:8.500px;border-radius:4px;background:#666"></div>


<!-- ================= RIGHT DOCK ================= -->
<div class="a" style="left:928.500px;top:68px;width:14px;height:331px;background:#4a4a4a"></div>
<div class="a" style="left:932px;top:68px;width:3px;height:331px;background:#4f4f4f"></div>
<div class="a" style="left:938.500px;top:68px;width:2px;height:331px;background:#4e4e4e"></div>
<svg style="left:932px;top:73.500px" width="7" height="4.400" viewBox="0 0 8 5"><path d="M.8 4.200L4 1.200 7.200 4.200" fill="none" stroke="#858585" stroke-width="1.400"/></svg>
<div class="a" style="left:942.500px;top:48px;width:57.500px;height:9px;background:#404040"></div>
<div class="a" style="left:941.500px;top:56px;width:30.500px;height:343px;background:#3b3b3b"></div>
<div class="a" style="left:943.500px;top:57px;width:27px;height:341.500px;background:#535353"></div>
<div class="a" style="left:943.500px;top:57px;width:27px;height:121px;background:#4a4a4a"></div>
<div class="a" style="left:970px;top:56px;width:30px;height:483px;background:#424242"></div>
<div class="a" style="left:972.500px;top:57px;width:27.500px;height:482px;background:#535353"></div>
<div class="a" style="left:972.500px;top:57px;width:27.500px;height:312.500px;background:#4a4a4a"></div>
<svg style="left:960px;top:50px" width="6" height="4.300" viewBox="0 0 7 5"><path d="M3 0L0 2.500 3 5zM6.800 0L3.800 2.500 6.800 5z" fill="#d0d0d0"/></svg>
<svg style="left:988.5px;top:50px" width="6" height="4.300" viewBox="0 0 7 5"><path d="M3 0L0 2.500 3 5zM6.800 0L3.800 2.500 6.800 5z" fill="#d0d0d0"/></svg>
<div class="a" style="left:943.5px;top:106px;width:27px;height:1px;background:#383838"></div>
<div class="a" style="left:950.5px;top:110px;width:13px;height:1px;background:#5c5c5c"></div>
<div class="a" style="left:943.5px;top:177.5px;width:27px;height:1px;background:#383838"></div>
<div class="a" style="left:972.5px;top:106px;width:27.5px;height:1px;background:#383838"></div>
<div class="a" style="left:979.5px;top:110px;width:13.5px;height:1px;background:#5c5c5c"></div>
<div class="a" style="left:972.5px;top:177.5px;width:27.5px;height:1px;background:#383838"></div>
<div class="a" style="left:979.5px;top:181.5px;width:13.5px;height:1px;background:#5c5c5c"></div>
<div class="a" style="left:972.5px;top:247.5px;width:27.5px;height:1px;background:#383838"></div>
<div class="a" style="left:979.5px;top:251.5px;width:13.5px;height:1px;background:#5c5c5c"></div>
<div class="a" style="left:972.5px;top:319px;width:27.5px;height:1px;background:#383838"></div>
<div class="a" style="left:979.5px;top:323px;width:13.5px;height:1px;background:#5c5c5c"></div>
<div class="a" style="left:972.5px;top:369px;width:27.5px;height:1px;background:#383838"></div>
<div class="a" style="left:950.500px;top:60.500px;width:13px;height:1px;background:#5c5c5c"></div>
<div class="a" style="left:979.500px;top:60.500px;width:13px;height:1px;background:#5c5c5c"></div>
<svg style="left:950.0px;top:67.0px" width="14" height="14" viewBox="0 0 14 14"><circle cx="7" cy="7" r="4.300" fill="none" stroke="#d8d8d8" stroke-width="1.500"/><circle cx="7" cy="7" r="1.600" fill="none" stroke="#d8d8d8" stroke-width="1"/><path d="M7 .4v2.400M7 11.200v2.400M.4 7h2.400M11.200 7h2.400M2.300 2.300l1.700 1.700M10 10l1.700 1.700M2.300 11.700l1.700-1.700M10 4l1.700-1.700" stroke="#d8d8d8" stroke-width="1.500"/></svg>
<svg style="left:950.0px;top:86.8px" width="14" height="14" viewBox="0 0 14 14"><circle cx="7" cy="7" r="5.600" fill="#d8d8d8"/><rect x="6.200" y="6" width="1.700" height="4.300" fill="#4a4a4a"/><rect x="6.200" y="3.400" width="1.700" height="1.700" fill="#4a4a4a"/></svg>
<span class="t" style="left:950.500px;top:117.500px;font-size:13px;color:#d8d8d8;line-height:13px;height:13px">A</span>
<div class="a" style="left:960.800px;top:117px;width:1px;height:13px;background:#d8d8d8"></div>
<span class="t" style="left:953px;top:138px;font-size:13px;font-weight:bold;color:#d8d8d8;line-height:14px;height:14px">¶</span>
<span class="t" style="left:951.500px;top:158.500px;font-family:'Liberation Serif',serif;font-style:italic;font-weight:bold;font-size:15px;color:#d8d8d8;line-height:15px;height:15px">O</span>
<svg style="left:979.2px;top:66.5px" width="14" height="14" viewBox="0 0 14 14"><defs><linearGradient id="cgd" x1="0" x2="1"><stop offset="0" stop-color="#eee"/><stop offset="1" stop-color="#888"/></linearGradient></defs><path d="M2 12.500V1.500A11 11 0 0 1 13 12.500Z" fill="url(#cgd)"/><path d="M2 12.500L9.800 4.700M2 12.500L12 8.500M2 12.500L5.800 2.200" stroke="#4a4a4a" stroke-width=".5"/><path d="M2 13.200h11" stroke="#d8d8d8" stroke-width=".8" stroke-dasharray="1.500 1"/></svg>
<svg style="left:979.2px;top:87.0px" width="14" height="14" viewBox="0 0 14 14"><circle cx="5.600" cy="7.400" r="3.800" fill="none" stroke="#d8d8d8" stroke-width="1.400"/><path d="M5.600 7.400L8 5.400M5.600 7.400V4.800" stroke="#d8d8d8" stroke-width="1"/><path d="M8.600 4.600L12 1.600M8.800 10.400L12 12.600" stroke="#d8d8d8" stroke-width="1"/><circle cx="12" cy="1.600" r="1.400" fill="#d8d8d8"/><circle cx="12.200" cy="12.600" r="1.400" fill="#d8d8d8"/></svg>
<svg style="left:978.2px;top:116.0px" width="16" height="16" viewBox="0 0 16 16"><path d="M4.600 11.500a3.700 3.700 0 0 1-.6-7.300 4.400 4.400 0 0 1 8 .8 3.300 3.300 0 0 1-.6 6.500z" fill="none" stroke="#d8d8d8" stroke-width="1.500"/><path d="M4.600 8.600a2.400 2.400 0 0 1 3.400-2.800l3 3.200M7 8.600a2.300 2.300 0 0 0 3.800-1.800" fill="none" stroke="#d8d8d8" stroke-width="1.100"/></svg>
<svg style="left:979.2px;top:137.5px" width="14" height="14" viewBox="0 0 14 14"><circle cx="7" cy="7" r="4" fill="#d8d8d8"/><circle cx="7" cy="7" r="5.800" fill="none" stroke="#d8d8d8" stroke-width="1.500" stroke-dasharray="1.100 1.180"/></svg>
<svg style="left:979.2px;top:158.0px" width="14" height="14" viewBox="0 0 14 14"><rect x="4.500" y="1.200" width="8.300" height="8.300" rx="1" fill="none" stroke="#d8d8d8" stroke-width="1.200"/><rect x="1.200" y="6.200" width="6" height="6" fill="#4a4a4a" stroke="#d8d8d8" stroke-width="1.100"/><rect x="2.600" y="7.600" width="3.200" height="3.200" fill="#d8d8d8"/></svg>
<svg style="left:979.2px;top:187.0px" width="14" height="14" viewBox="0 0 14 14"><path d="M6.500 2H1.800v10.400h10.400V7.600" fill="none" stroke="#d8d8d8" stroke-width="1.400"/><path d="M6.200 8L12.400 1.800M8.200 1.400h4.600V6" fill="none" stroke="#d8d8d8" stroke-width="1.400"/></svg>
<svg style="left:979.2px;top:208.3px" width="14" height="14" viewBox="0 0 14 14"><path d="M7 1.200L13 4.700 7 8.200 1 4.700Z" fill="#d8d8d8"/><path d="M1.600 7.800L7 11 12.400 7.800" fill="none" stroke="#d8d8d8" stroke-width="1.500"/></svg>
<svg style="left:979.2px;top:228.7px" width="14" height="14" viewBox="0 0 14 14"><rect x="1.200" y="1.200" width="7.600" height="8.600" fill="none" stroke="#d8d8d8" stroke-width="1.200"/><rect x="4.600" y="5.600" width="8.400" height="7" fill="#4a4a4a" stroke="#d8d8d8" stroke-width="1.200"/></svg>
<svg style="left:979.2px;top:258.7px" width="14" height="14" viewBox="0 0 14 14"><rect x="2.600" y="2.600" width="8.800" height="8.800" fill="none" stroke="#d8d8d8" stroke-width="1" stroke-dasharray="1.600 1.300"/><g fill="#d8d8d8"><rect x="1" y="1" width="3" height="3"/><rect x="10" y="1" width="3" height="3"/><rect x="1" y="10" width="3" height="3"/><rect x="10" y="10" width="3" height="3"/><rect x="5.700" y="1.200" width="2.600" height="2.600"/><rect x="5.700" y="10.200" width="2.600" height="2.600"/><rect x="1.200" y="5.700" width="2.600" height="2.600"/><rect x="10.200" y="5.700" width="2.600" height="2.600"/></g></svg>
<svg style="left:979.2px;top:279.3px" width="14" height="14" viewBox="0 0 14 14"><path d="M2 1v12" stroke="#d8d8d8" stroke-width="1.300"/><rect x="3.500" y="2.600" width="5.500" height="3.400" fill="#d8d8d8"/><rect x="3.500" y="8" width="9" height="3.400" fill="#d8d8d8"/></svg>
<div class="a" style="left:975.500px;top:298.500px;width:21px;height:17px;background:#2e2e2e"></div>
<svg style="left:979.2px;top:300.0px" width="14" height="14" viewBox="0 0 14 14"><rect x="1.500" y="1.500" width="6.500" height="6.500" fill="#d8d8d8"/><rect x="5" y="5" width="7" height="7" fill="#2e2e2e" stroke="#d8d8d8" stroke-width="1.100"/><rect x="5" y="5" width="3" height="3" fill="#9a9a9a"/></svg>
<svg style="left:979.2px;top:330.4px" width="14" height="14" viewBox="0 0 14 14"><path d="M1.500 2.800h11" stroke="#d8d8d8" stroke-width="1.200"/><path d="M1.500 6.600h11" stroke="#d8d8d8" stroke-width="1.800"/><path d="M1.500 11h11" stroke="#d8d8d8" stroke-width="2.600"/></svg>
<svg style="left:979.2px;top:350.8px" width="14" height="14" viewBox="0 0 14 14"><defs><linearGradient id="dgd" x1="0" x2="1"><stop offset="0" stop-color="#eee"/><stop offset="1" stop-color="#555"/></linearGradient></defs><rect x="1.200" y="2.300" width="11.600" height="9.400" fill="url(#dgd)" stroke="#d8d8d8" stroke-width="1.100"/></svg>


<!-- ================= FLOATING PANELS ================= -->
<!-- ===== Color panel ===== -->
<div class="a" style="left:536px;top:65px;width:349px;height:2px;background:#3a3a3a"></div>
<div class="a" id="p-color" style="left:537px;top:66px;width:176px;height:157.500px;background:#444;border-left:1px solid #3b3b3b;box-sizing:border-box"></div>
<div class="a" style="left:538px;top:93px;width:174.500px;height:125px;background:#535353"></div>
<div class="a" style="left:538px;top:217px;width:174.500px;height:6.500px;background:#4c4c4c"></div>
<div class="a" style="left:620px;top:220px;width:10px;height:1px;background:#6a6a6a"></div>
<div class="a" style="left:539px;top:75px;width:34px;height:18px;background:#535353"></div>
<svg style="left:541.500px;top:81.500px" width="4" height="6" viewBox="0 0 4 6"><path d="M2 .3L3.700 2.400H.3zM2 5.700L.3 3.600h3.400z" fill="#cfcfcf"/></svg>
<span class="t" style="left:549px;top:78.500px;font-size:9px;color:#ececec">颜色</span>
<svg style="left:690px;top:67.500px" width="6" height="4.300" viewBox="0 0 7 5"><path d="M3 0L0 2.500 3 5zM6.800 0L3.800 2.500 6.800 5z" fill="#d0d0d0"/></svg>
<svg style="left:703.500px;top:67.500px" width="6" height="6" viewBox="0 0 6 6"><path d="M.7.700L5.300 5.300M5.300.700L.7 5.300" stroke="#dcdcdc" stroke-width="1.400"/></svg>
<svg style="left:700.500px;top:82px" width="8" height="6" viewBox="0 0 8 6"><path d="M0 .6h8M0 2.200h8M0 3.800h8M0 5.400h8" stroke="#8a8a8a" stroke-width=".9"/></svg>
<svg style="left:542.500px;top:100px" width="8" height="7" viewBox="0 0 8 7"><rect x="2.800" y="2.400" width="4.600" height="4.200" fill="#111" stroke="#e0e0e0" stroke-width=".8"/><rect x=".4" y=".4" width="4.200" height="3.800" fill="#fff" stroke="#333" stroke-width=".5"/></svg>
<svg style="left:556.500px;top:100.500px" width="8" height="7" viewBox="0 0 8 7"><path d="M1.800 1.500c2.600-.2 4.400 1.300 4.400 3.800" fill="none" stroke="#cdcdcd" stroke-width="1.100"/><path d="M0 1.500L2.400 0v3zM6.200 7L4.600 4.800h3.200z" fill="#cdcdcd"/></svg>
<div class="a" style="left:550px;top:120px;width:13.500px;height:13.500px;background:#0e0e0e;border:1px solid #e6e6e6;box-sizing:border-box"></div>
<div class="a" style="left:553px;top:123px;width:7.500px;height:7.500px;background:#535353;border:1px solid #e6e6e6;box-sizing:border-box"></div>
<div class="a" style="left:542.500px;top:112.500px;width:14px;height:14px;background:#fff;border:1px solid #444;box-sizing:border-box"></div>
<span class="t" style="left:577px;top:102.500px;font-size:7.800px;color:#c0c0c0">H</span>
<span class="t" style="left:577px;top:126.500px;font-size:7.800px;color:#c0c0c0">S</span>
<span class="t" style="left:577px;top:150.500px;font-size:7.800px;color:#c0c0c0">B</span>
<div class="a" style="left:590px;top:106.500px;width:74px;height:3px;background:#fff"></div>
<div class="a" style="left:590px;top:131px;width:74px;height:3px;background:linear-gradient(90deg,#fff 0%,#fbe0ea 22%,#ee7fa4 50%,#d8235c 100%)"></div>
<div class="a" style="left:590px;top:154.500px;width:74.500px;height:3.500px;background:linear-gradient(90deg,#000,#fff)"></div>
<svg style="left:658px;top:109.500px" width="7" height="6" viewBox="0 0 7 6"><path d="M3.500 0L6.800 3V5.600H.2V3z" fill="#cfcfcf"/></svg>
<svg style="left:585.800px;top:134px" width="7" height="6" viewBox="0 0 7 6"><path d="M3.500 0L6.800 3V5.600H.2V3z" fill="#cfcfcf"/></svg>
<svg style="left:660.500px;top:158.500px" width="7" height="6" viewBox="0 0 7 6"><path d="M3.500 0L6.800 3V5.600H.2V3z" fill="#cfcfcf"/></svg>
<div class="inp" style="left:671px;top:100.500px;width:24.500px;height:13.500px"></div>
<div class="inp" style="left:671px;top:125.500px;width:24.500px;height:13px"></div>
<div class="inp" style="left:671px;top:150.500px;width:24.500px;height:13px"></div>
<span class="t" style="left:673px;top:101px;font-size:8.800px;color:#f0f0f0">345</span>
<span class="t" style="left:673px;top:126px;font-size:8.800px;color:#f0f0f0">0</span>
<span class="t" style="left:673px;top:151px;font-size:8.800px;color:#f0f0f0">100</span>
<span class="t" style="left:698.500px;top:100.500px;font-size:8px;color:#bdbdbd">°</span>
<span class="t" style="left:697.500px;top:126.500px;font-size:7px;color:#bdbdbd">%</span>
<span class="t" style="left:697.500px;top:150.500px;font-size:7px;color:#bdbdbd">%</span>
<svg style="left:543px;top:178.500px" width="27" height="9.500" viewBox="0 0 27 9.500"><rect width="9" height="9.500" fill="#fff"/><path d="M0 9.500L9 0" stroke="#d0202a" stroke-width="1.600"/><rect x="9" width="9" height="9.500" fill="#0c0c0c"/><rect x="18" width="9" height="9.500" fill="#fff"/></svg>
<div class="a" style="left:543px;top:196px;width:156.500px;height:15.500px;background:linear-gradient(180deg,#fff 0%,rgba(255,255,255,.85) 12%,rgba(255,255,255,0) 50%,rgba(0,0,0,0) 54%,#000 100%),linear-gradient(90deg,#f00 0%,#ff0 17%,#0f0 33%,#0ff 50%,#00f 67%,#f0f 83%,#f00 100%)"></div>

<!-- ===== Transparency panel ===== -->
<div class="a" style="left:712.500px;top:66px;width:2.500px;height:157.500px;background:#3a3a3a"></div>
<div class="a" id="p-trans" style="left:715px;top:66px;width:166.500px;height:139px;background:#444"></div>
<div class="a" style="left:881.500px;top:66px;width:2.500px;height:141px;background:#3c3c3c"></div>
<div class="a" style="left:713px;top:204.500px;width:171px;height:2.500px;background:#444"></div>
<div class="a" style="left:715px;top:93px;width:166.500px;height:111.500px;background:#535353"></div>
<div class="a" style="left:715px;top:75px;width:42px;height:18px;background:#535353"></div>
<svg style="left:717.500px;top:81.500px" width="4" height="6" viewBox="0 0 4 6"><path d="M2 .3L3.700 2.400H.3zM2 5.700L.3 3.600h3.400z" fill="#cfcfcf"/></svg>
<span class="t" style="left:725.500px;top:78.500px;font-size:9px;color:#ececec">透明度</span>
<svg style="left:860.500px;top:67.500px" width="6" height="4.300" viewBox="0 0 7 5"><path d="M3 0L0 2.500 3 5zM6.800 0L3.800 2.500 6.800 5z" fill="#d0d0d0"/></svg>
<svg style="left:874px;top:67.500px" width="6" height="6" viewBox="0 0 6 6"><path d="M.7.700L5.300 5.300M5.300.700L.7 5.300" stroke="#dcdcdc" stroke-width="1.400"/></svg>
<svg style="left:871.500px;top:82px" width="8" height="6" viewBox="0 0 8 6"><path d="M0 .6h8M0 2.200h8M0 3.800h8M0 5.400h8" stroke="#8a8a8a" stroke-width=".9"/></svg>
<div class="a" style="left:719px;top:100.500px;width:59px;height:12.500px;background:#474747;border:1px solid #4f4f4f;box-sizing:border-box"></div>
<span class="t" style="left:723px;top:100.500px">正常</span>
<svg class="chev" style="left:769.500px;top:104.500px" width="8" height="5" viewBox="0 0 8 5"><path d="M.8.800L4 3.800 7.200.800" fill="none" stroke="#e2e2e2" stroke-width="1.300"/></svg>
<span class="t" style="left:784.500px;top:100.500px">不透明度 :</span>
<div class="inp" style="left:829px;top:100.500px;width:36px;height:12.500px"></div>
<span class="t" style="left:831px;top:100.500px;font-size:8.400px;color:#f0f0f0">40%</span>
<div class="a" style="left:867px;top:100.500px;width:11px;height:12.500px;background:#4a4a4a;border:1px solid #5c5c5c;box-sizing:border-box"></div>
<svg style="left:869.500px;top:102.500px" width="6" height="9" viewBox="0 0 6 9"><path d="M1 1L4.600 4.500 1 8" fill="none" stroke="#e2e2e2" stroke-width="1.400"/></svg>
<div class="a" style="left:719px;top:119px;width:98px;height:50px;background:#505050;border:1px solid #595959;box-sizing:border-box"></div>
<div class="a" style="left:817.500px;top:123.500px;width:55px;height:14.500px;background:#595959;border:1px solid #5f5f5f;box-sizing:border-box;text-align:center;color:#6c6c6c;line-height:12.500px">制作蒙版</div>
<div class="cb" style="left:819.500px;top:143px;width:8px;height:8px;border-color:#666;background:#535353"></div>
<span class="t" style="left:832px;top:141px;color:#696969">剪切</span>
<div class="cb" style="left:819.500px;top:158px;width:8px;height:8px;border-color:#666;background:#535353"></div>
<span class="t" style="left:832px;top:156px;color:#696969">反相蒙版</span>
<div class="cb" style="left:719px;top:178px;width:8px;height:8px"></div>
<span class="t" style="left:731px;top:176px">隔离混合</span>
<div class="cb" style="left:771px;top:178px;width:8px;height:8px"></div>
<span class="t" style="left:782.500px;top:176px">挖空组</span>
<div class="cb" style="left:719px;top:192.500px;width:8px;height:8px"></div>
<span class="t" style="left:731px;top:190.500px">不透明度和蒙版用来定义挖空形状</span>

<!-- ===== Pathfinder panel ===== -->
<div class="a" id="p-path" style="left:800px;top:246.500px;width:169px;height:102px;background:#3a3a3a"></div>
<div class="a" style="left:801.500px;top:248px;width:167px;height:99px;background:#535353"></div>
<div class="a" style="left:801.500px;top:248px;width:167px;height:21px;background:#444"></div>
<div class="a" style="left:865.500px;top:248px;width:57px;height:21px;background:#535353"></div>
<div class="a" style="left:832.500px;top:250px;width:1px;height:17px;background:#3c3c3c"></div>
<span class="t" style="left:809px;top:253px;color:#989898">变换</span>
<span class="t" style="left:840px;top:253px;color:#989898">对齐</span>
<span class="t" style="left:872px;top:253px;font-size:9px;color:#f0f0f0">路径查找器</span>
<svg style="left:940px;top:256px" width="9" height="6" viewBox="0 0 9 6"><path d="M.8.600L3.400 3 .8 5.400M4.800.600L7.400 3 4.800 5.400" fill="none" stroke="#dcdcdc" stroke-width="1.200"/></svg>
<div class="a" style="left:953.500px;top:254.500px;width:1px;height:9px;background:#8a8a8a"></div>
<svg style="left:958.500px;top:256px" width="8" height="6" viewBox="0 0 8 6"><path d="M0 .6h8M0 2.200h8M0 3.800h8M0 5.400h8" stroke="#8a8a8a" stroke-width=".9"/></svg>
<span class="t" style="left:806.500px;top:274px;color:#d2d2d2">形状模式 :</span>
<span class="t" style="left:806.500px;top:310.500px;color:#d2d2d2">路径查找器 :</span>
<div class="a" style="left:912.500px;top:291px;width:55.500px;height:12.500px;background:#5a5a5a;text-align:center;color:#6e6e6e;line-height:12px">扩展</div>
<!--PFICONS-->
<svg style="left:809.6px;top:291.5px" width="12" height="12" viewBox="0 0 12 12"><path d="M1 1h7v3.500h3.500v7H4.500V8H1z" fill="#dcdcdc"/><path d="M4.500 4.500h3.500V8H4.500z" fill="none" stroke="#9a9a9a" stroke-width=".5"/></svg>
<svg style="left:835.7px;top:291.5px" width="12" height="12" viewBox="0 0 12 12"><path d="M1 1h7v3.500H4.500V8H1z" fill="#dcdcdc"/><rect x="4.800" y="4.800" width="6.400" height="6.400" fill="none" stroke="#dcdcdc" stroke-width=".9"/></svg>
<svg style="left:862.4px;top:291.5px" width="12" height="12" viewBox="0 0 12 12"><rect x="1.200" y="1.200" width="6.600" height="6.600" fill="none" stroke="#dcdcdc" stroke-width=".9"/><rect x="4.600" y="4.600" width="6.600" height="6.600" fill="none" stroke="#dcdcdc" stroke-width=".9"/><rect x="4.600" y="4.600" width="3.200" height="3.200" fill="#dcdcdc"/></svg>
<svg style="left:889.0px;top:291.5px" width="12" height="12" viewBox="0 0 12 12"><path d="M1 1h7v3.500h3.500v7H4.500V8H1z" fill="#dcdcdc"/><rect x="4.800" y="4.800" width="2.900" height="2.900" fill="#535353"/></svg>
<svg style="left:811.8px;top:327.5px" width="12" height="12" viewBox="0 0 12 12"><rect x="1.200" y="1.200" width="6.600" height="6.600" fill="#535353" stroke="#dcdcdc" stroke-width="1"/><rect x="4.600" y="4.600" width="6.600" height="6.600" fill="#535353" stroke="#dcdcdc" stroke-width="1"/><rect x="4.600" y="4.600" width="3.200" height="3.200" fill="none" stroke="#dcdcdc" stroke-width="1"/></svg>
<svg style="left:838.6px;top:327.5px" width="12" height="12" viewBox="0 0 12 12"><rect x="1" y="1" width="7" height="7" fill="#dcdcdc"/><rect x="4.300" y="4.300" width="7" height="7" fill="#c4c4c4" stroke="#535353" stroke-width=".9"/></svg>
<svg style="left:866.0px;top:327.5px" width="12" height="12" viewBox="0 0 12 12"><rect x="1" y="1" width="7" height="7" fill="#dcdcdc"/><rect x="4.300" y="4.300" width="7" height="7" fill="#bcbcbc" stroke="#535353" stroke-width=".7"/><path d="M1 1h3v7H1z" fill="#f0f0f0"/></svg>
<svg style="left:893.0px;top:327.5px" width="12" height="12" viewBox="0 0 12 12"><rect x="1.200" y="1.200" width="6.600" height="6.600" fill="none" stroke="#dcdcdc" stroke-width=".8" stroke-dasharray="1.300 .9"/><rect x="4.600" y="4.600" width="6.600" height="6.600" fill="none" stroke="#dcdcdc" stroke-width=".9"/><rect x="4.600" y="4.600" width="3.400" height="3.400" fill="#dcdcdc"/></svg>
<svg style="left:920.3px;top:327.5px" width="12" height="12" viewBox="0 0 12 12"><rect x="1.200" y="1.200" width="6.600" height="6.600" fill="none" stroke="#dcdcdc" stroke-width="1"/><rect x="4.600" y="4.600" width="6.600" height="6.600" fill="none" stroke="#dcdcdc" stroke-width="1"/></svg>
<svg style="left:948.4px;top:327.5px" width="12" height="12" viewBox="0 0 12 12"><rect x="1.200" y="1.200" width="6.600" height="6.600" fill="none" stroke="#dcdcdc" stroke-width=".9"/><path d="M8 4.500h3.500v7H4.500V8H8z" fill="#dcdcdc"/></svg>
<!--/PFICONS-->


<!-- ================= FRAME / CORNERS ================= -->
<div class="a" style="left:0;top:532.500px;width:1000px;height:7px;background:#0b1119"></div>
<div class="a" style="left:541px;top:533px;width:34px;height:6px;background:#3b424d"></div>
<svg style="left:0;top:0" width="1000" height="539" viewBox="0 0 1000 539">
 <path d="M38.800 0L0 38.800M961.200 0L1000 37.800M0 502.200L31 532M970 531.700L1000 502.200" stroke="#2e2e2e" stroke-width="1.600" fill="none"/>
 <polygon points="0,0 38,0 0,38" fill="#fff"/>
 <polygon points="962,0 1000,0 1000,37" fill="#fff"/>
 <polygon points="0,503 37.500,539 0,539" fill="#fff"/>
 <polygon points="969.700,539 969.700,531 1000,503 1000,539" fill="#fff"/>
</svg>
</div>
</body>
</html>
